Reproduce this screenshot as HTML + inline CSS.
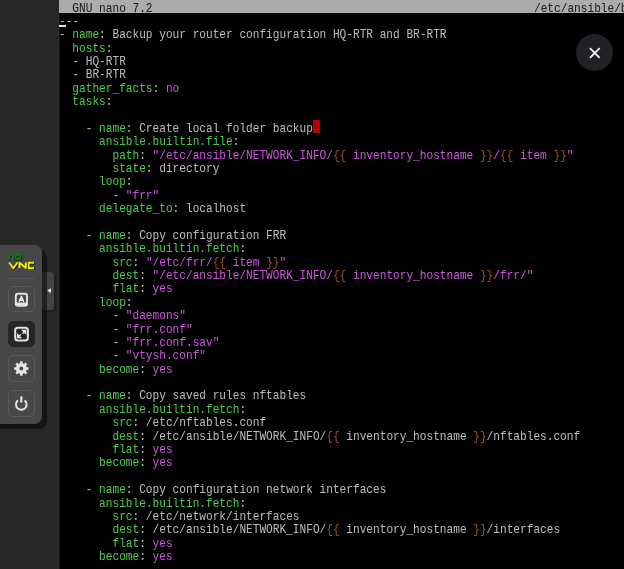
<!DOCTYPE html>
<html><head><meta charset="utf-8">
<style>
html,body{margin:0;padding:0;}
body{width:624px;height:569px;overflow:hidden;background:#282828;position:relative;}
#term{position:absolute;left:59px;top:0;width:564.7px;height:569px;background:#000;}
#txt{position:absolute;left:0;top:0;width:624px;height:569px;filter:blur(0.35px);}
#edge{position:absolute;left:58px;top:0;width:1px;height:569px;background:#2d2d2d;}
#edge2{position:absolute;left:59px;top:0;width:1px;height:569px;background:#141414;}
#titlebar{position:absolute;left:59.3px;top:0;width:564.7px;height:13px;background:#acacac;}
.ln{position:absolute;left:59.349999999999994px;white-space:pre;font-family:"Liberation Mono",monospace;font-size:12.6px;line-height:13.38px;height:13.38px;color:#b8b8b8;transform:scaleX(0.88399);transform-origin:0 0;}
.ln i{font-style:normal;}
.ln{-webkit-text-stroke:0.05px currentColor;}
.tt{color:#1c1c1c;}
.k{color:#4cc84c;} .d{color:#c8c050;} .s{color:#c855d8;} .b{color:#9a5412;}
#redblk{position:absolute;left:313.25px;top:120.00px;width:6.68px;height:13.38px;background:#b80000;}
#cur{position:absolute;left:59.3px;top:25px;width:7px;height:2px;background:#e0e0e0;}
#close{position:absolute;left:575.5px;top:33.5px;width:37px;height:37px;border-radius:50%;background:#202226;}
#panel{position:absolute;left:-10px;top:244.7px;width:52px;height:179px;background:#484848;border-radius:0 8px 8px 0;box-shadow:5px 5px 0 rgba(0,0,0,0.5);}
#handle{position:absolute;left:30px;top:271.6px;width:24px;height:38.4px;background:#434343;border-radius:4px;box-shadow:2.5px 2.5px 0 rgba(0,0,0,0.25);}
.btn{position:absolute;left:8.2px;width:26.5px;height:26.5px;box-sizing:border-box;border:1px solid #5a5a5a;border-radius:5px;}
.sel{background:#262626;border-color:#262626}
</style></head><body>
<div id="term"></div>
<div id="edge"></div><div id="edge2"></div>
<div id="titlebar"></div>
<div id="txt"><div class="ln tt" style="top:3.00px">  GNU nano 7.2</div><div class="ln tt" style="top:3.00px;left:533.79px">/etc/ansible/b</div>
<div id="redblk"></div>
<div id="cur"></div>
<div class="ln" style="top:16.00px">---</div>
<div class="ln" style="top:29.00px"><i class="d">-</i> <i class="k">name</i>: Backup your router configuration HQ-RTR and BR-RTR</div>
<div class="ln" style="top:43.00px">  <i class="k">hosts</i>:</div>
<div class="ln" style="top:56.00px">  <i class="d">-</i> HQ-RTR</div>
<div class="ln" style="top:69.00px">  <i class="d">-</i> BR-RTR</div>
<div class="ln" style="top:83.00px">  <i class="k">gather_facts</i>: <i class="s">no</i></div>
<div class="ln" style="top:96.00px">  <i class="k">tasks</i>:</div>
<div class="ln" style="top:123.00px">    <i class="d">-</i> <i class="k">name</i>: Create local folder backup</div>
<div class="ln" style="top:136.00px">      <i class="k">ansible.builtin.file</i>:</div>
<div class="ln" style="top:150.00px">        <i class="k">path</i>: <i class="s">&quot;/etc/ansible/NETWORK_INFO/</i><i class="b">{{</i><i class="s"> inventory_hostname </i><i class="b">}}</i><i class="s">/</i><i class="b">{{</i><i class="s"> item </i><i class="b">}}</i><i class="s">&quot;</i></div>
<div class="ln" style="top:163.00px">        <i class="k">state</i>: directory</div>
<div class="ln" style="top:176.00px">      <i class="k">loop</i>:</div>
<div class="ln" style="top:190.00px">        <i class="d">-</i> <i class="s">&quot;frr&quot;</i></div>
<div class="ln" style="top:203.00px">      <i class="k">delegate_to</i>: localhost</div>
<div class="ln" style="top:230.00px">    <i class="d">-</i> <i class="k">name</i>: Copy configuration FRR</div>
<div class="ln" style="top:243.00px">      <i class="k">ansible.builtin.fetch</i>:</div>
<div class="ln" style="top:257.00px">        <i class="k">src</i>: <i class="s">&quot;/etc/frr/</i><i class="b">{{</i><i class="s"> item </i><i class="b">}}</i><i class="s">&quot;</i></div>
<div class="ln" style="top:270.00px">        <i class="k">dest</i>: <i class="s">&quot;/etc/ansible/NETWORK_INFO/</i><i class="b">{{</i><i class="s"> inventory_hostname </i><i class="b">}}</i><i class="s">/frr/&quot;</i></div>
<div class="ln" style="top:283.00px">        <i class="k">flat</i>: <i class="s">yes</i></div>
<div class="ln" style="top:297.00px">      <i class="k">loop</i>:</div>
<div class="ln" style="top:310.00px">        <i class="d">-</i> <i class="s">&quot;daemons&quot;</i></div>
<div class="ln" style="top:324.00px">        <i class="d">-</i> <i class="s">&quot;frr.conf&quot;</i></div>
<div class="ln" style="top:337.00px">        <i class="d">-</i> <i class="s">&quot;frr.conf.sav&quot;</i></div>
<div class="ln" style="top:350.00px">        <i class="d">-</i> <i class="s">&quot;vtysh.conf&quot;</i></div>
<div class="ln" style="top:364.00px">      <i class="k">become</i>: <i class="s">yes</i></div>
<div class="ln" style="top:390.00px">    <i class="d">-</i> <i class="k">name</i>: Copy saved rules nftables</div>
<div class="ln" style="top:404.00px">      <i class="k">ansible.builtin.fetch</i>:</div>
<div class="ln" style="top:417.00px">        <i class="k">src</i>: /etc/nftables.conf</div>
<div class="ln" style="top:431.00px">        <i class="k">dest</i>: /etc/ansible/NETWORK_INFO/<i class="b">{{</i> inventory_hostname <i class="b">}}</i>/nftables.conf</div>
<div class="ln" style="top:444.00px">        <i class="k">flat</i>: <i class="s">yes</i></div>
<div class="ln" style="top:457.00px">      <i class="k">become</i>: <i class="s">yes</i></div>
<div class="ln" style="top:484.00px">    <i class="d">-</i> <i class="k">name</i>: Copy configuration network interfaces</div>
<div class="ln" style="top:498.00px">      <i class="k">ansible.builtin.fetch</i>:</div>
<div class="ln" style="top:511.00px">        <i class="k">src</i>: /etc/network/interfaces</div>
<div class="ln" style="top:524.00px">        <i class="k">dest</i>: /etc/ansible/NETWORK_INFO/<i class="b">{{</i> inventory_hostname <i class="b">}}</i>/interfaces</div>
<div class="ln" style="top:538.00px">        <i class="k">flat</i>: <i class="s">yes</i></div>
<div class="ln" style="top:551.00px">      <i class="k">become</i>: <i class="s">yes</i></div></div>
<div id="close"><svg width="37" height="37" viewBox="0 0 37 37" style="position:absolute;left:0;top:0"><path d="M13.9 14.1 L23.7 23.9 M23.7 14.1 L13.9 23.9" stroke="#f0f0f0" stroke-width="1.9" stroke-linecap="butt"/></svg></div>
<div id="handle"><svg width="24" height="39" style="position:absolute;left:0;top:0"><path d="M17.3 18.6 L20.9 16.2 L20.9 21.2 Z" fill="#ececec"/></svg></div>
<div id="panel"></div>
<div class="btn" style="top:285.9px"></div>
<div class="btn sel" style="top:320.8px"></div>
<div class="btn" style="top:355.3px"></div>
<div class="btn" style="top:390px"></div>
<svg width="42" height="180" style="position:absolute;left:0;top:244px" viewBox="0 244 42 180">
 <g fill="none" stroke-linejoin="round">
  <!-- logo shadow -->
  <g stroke="#1c1c28" stroke-width="1.9" transform="translate(0.8,0.8)">
   <path d="M8.95 259.7 V255.0 H13.15 V259.7"/>
   <path d="M15.55 254.95 H20.55 V258.85 H15.55 Z"/>
   <path d="M9.1 262.5 L13.3 268.3 L17.5 262.5"/>
   <path d="M19.5 268.3 V262.8 L25.8 268 V262.5"/>
   <path d="M34 262.8 H28.7 V268.2 H34"/>
  </g>
  <g stroke="#0a820a" stroke-width="1.7">
   <path d="M8.95 259.7 V255.0 H13.15 V259.7"/>
   <path d="M15.55 254.95 H20.55 V258.85 H15.55 Z"/>
  </g>
  <g stroke="#eded00" stroke-width="1.9">
   <path d="M9.1 262.5 L13.3 268.3 L17.5 262.5"/>
   <path d="M19.5 268.3 V262.8 L25.8 268 V262.5"/>
   <path d="M34 262.8 H28.7 V268.2 H34"/>
  </g>
  <path d="M8 278.5 H34.8" stroke="#555" stroke-width="1"/>
 </g>
 <!-- key icon -->
 <rect x="15.8" y="293.8" width="11.2" height="11.9" rx="2.2" fill="none" stroke="#e4e4e4" stroke-width="1.9"/>
 <rect x="15.4" y="302.6" width="12" height="3.4" rx="0.8" fill="#e4e4e4"/>
 <path d="M19.1 301.9 L21.4 296.5 L23.7 301.9 M20 300.2 H22.8" stroke="#e8e8e8" stroke-width="1.5" fill="none" stroke-linejoin="round"/>
 <!-- fullscreen icon -->
 <rect x="15.2" y="327.7" width="12.7" height="12.7" rx="2.6" fill="none" stroke="#e4e4e4" stroke-width="2"/>
 <path d="M22.6 330.5 H25.6 V333.5 Z M25 331.1 L22.4 333.7" stroke="#e4e4e4" stroke-width="1.3" fill="#e4e4e4"/>
 <path d="M17.6 334.6 V337.6 H20.6 Z M18.2 337 L20.8 334.4" stroke="#e4e4e4" stroke-width="1.3" fill="#e4e4e4"/>
 <!-- gear -->
 <g transform="translate(21.3,368.5)" fill="#e4e4e4">
  <circle r="5.4"/>
  <g id="teeth">
   <rect x="-1.3" y="-7.2" width="2.6" height="3" />
   <rect x="-1.3" y="-7.2" width="2.6" height="3" transform="rotate(45)"/>
   <rect x="-1.3" y="-7.2" width="2.6" height="3" transform="rotate(90)"/>
   <rect x="-1.3" y="-7.2" width="2.6" height="3" transform="rotate(135)"/>
   <rect x="-1.3" y="-7.2" width="2.6" height="3" transform="rotate(180)"/>
   <rect x="-1.3" y="-7.2" width="2.6" height="3" transform="rotate(225)"/>
   <rect x="-1.3" y="-7.2" width="2.6" height="3" transform="rotate(270)"/>
   <rect x="-1.3" y="-7.2" width="2.6" height="3" transform="rotate(315)"/>
  </g>
  <circle r="1.9" fill="#474747"/>
 </g>
 <!-- power -->
 <path d="M18.0 400.4 A5.3 5.3 0 1 0 24.6 400.4" fill="none" stroke="#e4e4e4" stroke-width="2"/>
 <path d="M21.3 397.3 V401.7" stroke="#e4e4e4" stroke-width="2.2" stroke-linecap="round"/>
</svg>
</body></html>
